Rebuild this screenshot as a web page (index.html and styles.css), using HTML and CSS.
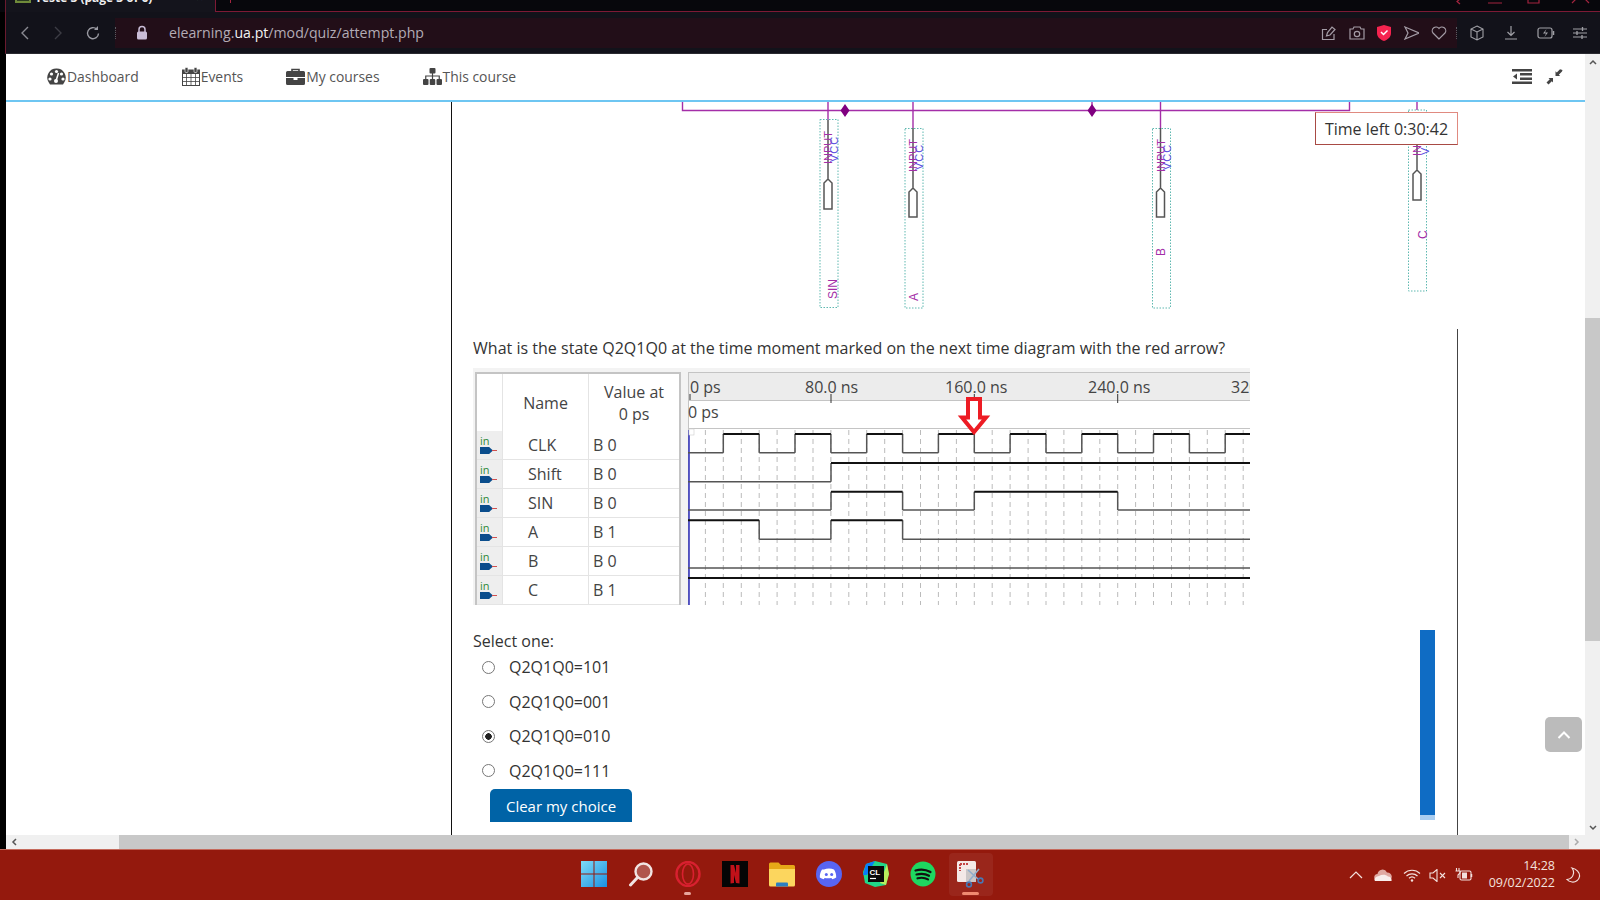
FILE: index.html
```html
<!DOCTYPE html>
<html lang="en">
<head>
<meta charset="utf-8" />
<title>Teste 3 (page 3 of 6)</title>
<link rel="stylesheet" href="styles.css">
</head>
<body>

<!-- browser chrome -->
<div class="tabstrip">
	<div class="tab">
		<span class="tab-fav"></span>
		<span class="tab-title">Teste 3 (page 3 of 6)</span>
		<span class="tab-close">×</span>
	</div>
	<div class="tab-rest">
		<span class="tab-plus"></span>
		<svg class="winctl" width="135" height="12" viewBox="0 0 135 12"><path d="M5-1 2 1.500 5 4M33 3h14M73 0v3h11V0M117 3l4-4M134 3l-4-4" fill="none" stroke="#a3243f" stroke-width="1.200"/></svg>
	</div>
</div>

<div class="addressbar">
	<div class="nav-btns">
		<svg width="12" height="16" viewBox="0 0 12 16"><path d="M9 2 3 8l6 6" fill="none" stroke="#8a8a92" stroke-width="1.400"/></svg>
		<svg width="12" height="16" viewBox="0 0 12 16"><path d="M3 2l6 6-6 6" fill="none" stroke="#3c3c44" stroke-width="1.400"/></svg>
		<svg width="16" height="16" viewBox="0 0 16 16"><path d="M13.500 8.500a5.500 5.500 0 1 1-1.800-4.400" fill="none" stroke="#9a9aa2" stroke-width="1.400"/><path d="M13 1v4H9z" fill="#9a9aa2"/></svg>
	</div>
	<div class="urlbox">
		<svg class="lock" width="12" height="15" viewBox="0 0 12 15"><path d="M3 7V4.500a3 3 0 0 1 6 0V7" fill="none" stroke="#c9bcd6" stroke-width="1.500"/><rect x="1" y="6.500" width="10" height="8" rx="1.500" fill="#c9bcd6"/></svg>
		<span class="url">elearning.<b>ua.pt</b>/mod/quiz/attempt.php</span>
		<div class="url-icons">
			<svg width="16" height="16" viewBox="0 0 16 16"><path d="M13 9v5.500H1.500v-10H6M5.500 11l1-3.500L11 2l3 2.500L9 10z" fill="none" stroke="#a49ca6" stroke-width="1.200"/></svg>
			<svg width="16" height="14" viewBox="0 0 16 14"><path d="M1 3h3l1-2h6l1 2h3v10H1z" fill="none" stroke="#a49ca6" stroke-width="1.200"/><circle cx="8" cy="8" r="2.700" fill="none" stroke="#a49ca6" stroke-width="1.200"/></svg>
			<svg width="14" height="16" viewBox="0 0 14 16"><path d="M7 0l7 2v6c0 4-3 6.500-7 8-4-1.500-7-4-7-8V2z" fill="#f5234f"/><path d="M4 7l2.500 2.500L10.500 5.500" fill="none" stroke="#fff" stroke-width="1.500"/></svg>
			<svg width="16" height="14" viewBox="0 0 16 14"><path d="M2 1l14 6-14 6 3-6z" fill="none" stroke="#a49ca6" stroke-width="1.200"/></svg>
			<svg width="16" height="14" viewBox="0 0 16 14"><path d="M8 13 2 7a3.700 3.700 0 0 1 6-4.500A3.700 3.700 0 0 1 14 7z" fill="none" stroke="#a49ca6" stroke-width="1.200"/></svg>
		</div>
	</div>
	<div class="tool-icons">
		<svg width="16" height="16" viewBox="0 0 16 16"><path d="M8 1l6 3v8l-6 3-6-3V4zM2 4l6 3 6-3M8 7v8" fill="none" stroke="#a0a0a6" stroke-width="1.100"/></svg>
		<svg width="16" height="16" viewBox="0 0 16 16"><path d="M8 1v9M4.500 7 8 10.500 11.500 7M2 14h12" fill="none" stroke="#a0a0a6" stroke-width="1.200"/></svg>
		<svg width="18" height="12" viewBox="0 0 18 12"><rect x="1" y="1" width="14" height="10" rx="2" fill="none" stroke="#a0a0a6" stroke-width="1.200"/><path d="M16.500 4v4" stroke="#a0a0a6" stroke-width="1.500"/><path d="M9.500 2 6 6.500h3L7.500 10 11 5.500H8z" fill="#a0a0a6"/></svg>
		<svg width="14" height="14" viewBox="0 0 14 14"><path d="M0 3h14M0 7h14M0 11h14" stroke="#a0a0a6"/><path d="M9.500 1v4M4 5v4M9 9v4" stroke="#a0a0a6" stroke-width="1.300"/></svg>
	</div>
</div>

<!-- the moodle page itself -->
<div class="viewport">
	<div class="page">
		<div class="topnav">
			<a class="topnav-item">
				<svg width="19" height="17" viewBox="0 0 19 17"><path d="M9.500 0.500a9 9 0 0 0-8 13.500l1.500 2.500h13l1.500-2.500a9 9 0 0 0-8-13.500z" fill="#444"/><circle cx="9.500" cy="3.500" r="1.600" fill="#fff"/><circle cx="4.500" cy="6" r="1.600" fill="#fff"/><circle cx="14.500" cy="6" r="1.600" fill="#fff"/><circle cx="3" cy="11" r="1.600" fill="#fff"/><circle cx="16" cy="11" r="1.600" fill="#fff"/><path d="M9 13 11.500 5" stroke="#fff" stroke-width="1.500"/><circle cx="9" cy="13" r="2" fill="#fff"/></svg>
				Dashboard
			</a>
			<a class="topnav-item">
				<svg width="18" height="19" viewBox="0 0 18 19"><rect x="0.500" y="3" width="17" height="15.500" fill="none" stroke="#444"/><path d="M0.500 3h17v4h-17z" fill="#444"/><path d="M0 10.500h18M0 14.500h18M4.500 7v11M9 7v11M13.500 7v11" stroke="#444" stroke-width="0.800"/><rect x="3" y="0.500" width="3" height="5" rx="1" fill="#444" stroke="#fff" stroke-width="0.600"/><rect x="12" y="0.500" width="3" height="5" rx="1" fill="#444" stroke="#fff" stroke-width="0.600"/></svg>
				Events
			</a>
			<a class="topnav-item">
				<svg width="19" height="17" viewBox="0 0 19 17"><path d="M6 3V1.500h7V3" fill="none" stroke="#444" stroke-width="1.600"/><path d="M1.500 3h16A1.500 1.500 0 0 1 19 4.500V9H0V4.500A1.500 1.500 0 0 1 1.500 3zM0 10h7.500v2h4v-2H19v5.500a1.500 1.500 0 0 1-1.500 1.500h-16A1.500 1.500 0 0 1 0 15.500z" fill="#444"/></svg>
				My courses
			</a>
			<a class="topnav-item">
				<svg width="19" height="17" viewBox="0 0 19 17"><rect x="6.500" y="0" width="6" height="5.500" rx="1" fill="#444"/><rect x="0" y="11" width="5.500" height="6" rx="1" fill="#444"/><rect x="6.750" y="11" width="5.500" height="6" rx="1" fill="#444"/><rect x="13.500" y="11" width="5.500" height="6" rx="1" fill="#444"/><path d="M9.500 5v6M2.750 11V8h13.500v3" fill="none" stroke="#444" stroke-width="1.200"/></svg>
				This course
			</a>
			<div class="topnav-right">
				<svg width="20" height="15" viewBox="0 0 20 15"><path d="M0 0h20v2.500H0zM8 4h12v2.500H8zM8 8.500h12V11H8zM0 12.500h20V15H0z" fill="#444"/><path d="M5 4.500v6L1 7.500z" fill="#444"/></svg>
				<svg width="17" height="16" viewBox="0 0 17 16"><path d="M16.500 1 14 .2 10.800 3.500 9.500 2.300V7h4.700l-1.400-1.300L16 2.500zM0.500 13.500l2 2 3.300-3.300L7 13.500V9H2.500l1.300 1.300z" fill="#444"/></svg>
			</div>
		</div>

		<div class="content">
			<div class="columns">
				<div class="region-left"></div>
				<div class="region-main">
					<svg class="schematic" width="1006" height="227" viewBox="452 102 1006 227">
						<g fill="none" stroke="#a42ea8" stroke-width="1.400">
							<path d="M682.500 102v8.500h667V102"/>
							<path d="M828 102v18M913 102v26M1160.500 102v26M1417 102v8M1092 102v8"/>
						</g>
						<path d="M845 104l4.500 6.500-4.500 6.500-4.500-6.500zM1092 104l4.500 6.500-4.500 6.500-4.500-6.500z" fill="#800080"/>

						<g fill="none" stroke="#5eb8b0" stroke-dasharray="1.500 1.500">
							<rect x="820" y="119.500" width="18" height="188"/>
							<rect x="905" y="128.500" width="18" height="179.500"/>
							<rect x="1152.500" y="128.500" width="18" height="179.500"/>
							<rect x="1408.500" y="110" width="18" height="181"/>
						</g>

						<g fill="none" stroke="#555" stroke-width="1.500">
							<path d="M828 120v59M824 209v-26l4-4 4 4v26z" fill="#fff"/>
							<path d="M913 128v60M909 217v-25l4-4 4 4v25z" fill="#fff"/>
							<path d="M1160.500 128v60M1156.500 217v-25l4-4 4 4v25z" fill="#fff"/>
							<path d="M1417 145v25M1413 200v-26l4-4 4 4v26z" fill="#fff"/>
						</g>

						<g class="pin-input">
							<text transform="translate(832 164) rotate(-90)">INPUT</text>
							<text transform="translate(917 172) rotate(-90)">INPUT</text>
							<text transform="translate(1164.500 172) rotate(-90)">INPUT</text>
							<text transform="translate(1421 156) rotate(-90)">IN</text>
						</g>
						<g class="pin-vcc">
							<text transform="translate(838 162) rotate(-90)">VCC</text>
							<text transform="translate(923 170) rotate(-90)">VCC</text>
							<text transform="translate(1170.500 170) rotate(-90)">VCC</text>
							<text transform="translate(1429 155) rotate(-90)">V</text>
						</g>
						<g class="pin-name">
							<text transform="translate(837 299) rotate(-90)">SIN</text>
							<text transform="translate(918 301) rotate(-90)">A</text>
							<text transform="translate(1165 256) rotate(-90)">B</text>
							<text transform="translate(1427 239) rotate(-90)">C</text>
						</g>
					</svg>

					<div class="question">
						<p class="question-text">What is the state Q2Q1Q0 at the time moment marked on the next time diagram with the red arrow?</p>

						<div class="wave-shot">
							<table class="signals">
								<tr class="signals-head">
									<th class="col-icon"></th>
									<th class="col-name">Name</th>
									<th class="col-value">Value at<br>0 ps</th>
								</tr>
								<tr><td class="col-icon"><span class="in-icon">in</span></td><td class="col-name">CLK</td><td>B 0</td></tr>
								<tr><td class="col-icon"><span class="in-icon">in</span></td><td class="col-name">Shift</td><td>B 0</td></tr>
								<tr><td class="col-icon"><span class="in-icon">in</span></td><td class="col-name">SIN</td><td>B 0</td></tr>
								<tr><td class="col-icon"><span class="in-icon">in</span></td><td class="col-name">A</td><td>B 1</td></tr>
								<tr><td class="col-icon"><span class="in-icon">in</span></td><td class="col-name">B</td><td>B 0</td></tr>
								<tr><td class="col-icon"><span class="in-icon">in</span></td><td class="col-name">C</td><td>B 1</td></tr>
								<tr class="signals-cut"><td class="col-icon"></td><td class="col-name"></td><td></td></tr>
							</table>
							<svg class="wave-plot" width="562" height="233" viewBox="688 372 562 233">
								<rect x="688" y="372" width="562" height="29" fill="#ececec"/>
								<path d="M688 372.500h562M688 400.500h562M688 428.500h562" stroke="#c4c4c4"/>
								<path d="M688.500 372v233" stroke="#c4c4c4"/>
								<path d="M690 394v6M831 394v9M974.300 394v9M1117.700 394v9" stroke="#333"/>
								<path id="grid" stroke="#bbb" stroke-dasharray="5 4" d="M705.400 430v175M723.300 430v175M741.300 430v175M759.200 430v175M777.100 430v175M795 430v175M813 430v175M830.900 430v175M848.800 430v175M866.700 430v175M884.700 430v175M902.600 430v175M920.500 430v175M938.400 430v175M956.400 430v175M974.300 430v175M992.200 430v175M1010.100 430v175M1028.100 430v175M1046 430v175M1063.900 430v175M1081.800 430v175M1099.800 430v175M1117.700 430v175M1135.600 430v175M1153.500 430v175M1171.500 430v175M1189.400 430v175M1207.300 430v175M1225.200 430v175M1243.200 430v175"/>
								<path d="M689 430v175" stroke="#2a2ab8" stroke-width="1.500"/>
								<rect x="689" y="429" width="5" height="6" fill="#fff" stroke="#ccc" stroke-width="0.600"/>

								<g class="wave-ruler">
									<text x="690" y="393">0 ps</text>
									<text x="805" y="393">80.0 ns</text>
									<text x="945" y="393">160.0 ns</text>
									<text x="1088" y="393">240.0 ns</text>
									<text x="1231" y="393">320.0 ns</text>
									<text x="688" y="418">0 ps</text>
								</g>

								<g class="wave-low">
									<path d="M688 452.700h35.300M759.200 452.700H795M830.900 452.700h35.800M902.600 452.700h35.800M974.300 452.700h35.800M1046 452.700h35.800M1117.700 452.700h35.800M1189.400 452.700h35.800"/>
									<path d="M688 481.700h143M688 510h143M902.600 510h71.700M1117.700 510H1250M759.200 539.300h71.700M902.600 539.300H1250M688 568h562"/>
									<path d="M723.300 452.700V434M759.200 434v18.700M795 452.700V434M830.900 434v18.700M866.700 452.700V434M902.600 434v18.700M938.400 452.700V434M974.300 434v18.700M1010.100 452.700V434M1046 434v18.700M1081.800 452.700V434M1117.700 434v18.700M1153.500 452.700V434M1189.400 434v18.700M1225.200 452.700V434"/>
									<path d="M831 481.700V463M831 510v-18.300M902.600 491.700V510M974.300 510v-18.300M1117.700 491.700V510M759.200 520.300v19M830.900 539.300v-19M902.600 520.300v19"/>
								</g>
								<g class="wave-high">
									<path d="M723.300 434h35.900M795 434h35.900M866.700 434h35.900M938.400 434h35.900M1010.100 434h35.900M1081.800 434h35.900M1153.500 434h35.900M1225.200 434H1250"/>
									<path d="M831 463h419M831 491.700h71.600M974.300 491.700h143.400M688 520.300h71.200M830.900 520.300h71.700M688 578h562"/>
								</g>
								<path d="M968 399h12v18.500h6L974 432l-12-14.500h6z" fill="#fff" stroke="#ed1c24" stroke-width="4"/>
							</svg>
						</div>

						<div class="answer-row">
							<div class="answer">
								<div class="prompt">Select one:</div>
								<label class="option"><input type="radio" name="q3" />Q2Q1Q0=101</label>
								<label class="option"><input type="radio" name="q3" />Q2Q1Q0=001</label>
								<label class="option"><input type="radio" name="q3" checked />Q2Q1Q0=010</label>
								<label class="option"><input type="radio" name="q3" />Q2Q1Q0=111</label>
								<button class="clear-btn">Clear my choice</button>
							</div>
							<div class="blue-bar"></div>
						</div>
					</div>
				</div>
			</div>
			<div class="timer">Time left 0:30:42</div>
			<div class="back-top"><svg width="14" height="8" viewBox="0 0 14 8"><path d="M1.500 7 7 1.500 12.500 7" fill="none" stroke="#fff" stroke-width="2"/></svg></div>
		</div>

		<div class="hscroll">
			<div class="hscroll-arrow"><svg width="6" height="8" viewBox="0 0 6 8"><path d="M5 1 2 4l3 3" fill="none" stroke="#555" stroke-width="1.500"/></svg></div>
			<div class="hscroll-thumb"></div>
			<div class="hscroll-arrow hscroll-arrow-r"><svg width="6" height="8" viewBox="0 0 6 8"><path d="M1 1l3 3-3 3" fill="none" stroke="#aaa" stroke-width="1.500"/></svg></div>
		</div>
	</div>

	<div class="vscroll">
		<div class="vscroll-btn"><svg width="8" height="6" viewBox="0 0 8 6"><path d="M1 5l3-3 3 3" fill="none" stroke="#555" stroke-width="1.500"/></svg></div>
		<div class="vscroll-track"><div class="vscroll-thumb"></div></div>
		<div class="vscroll-btn"><svg width="8" height="6" viewBox="0 0 8 6"><path d="M1 1l3 3 3-3" fill="none" stroke="#555" stroke-width="1.500"/></svg></div>
		<div class="vscroll-corner"></div>
	</div>
</div>

<!-- windows taskbar -->
<div class="taskbar">
	<div class="task-apps">
		<span class="app"><svg width="26" height="26" viewBox="0 0 26 26"><defs><linearGradient id="win" x1="0" y1="0" x2="1" y2="1"><stop offset="0" stop-color="#7fdcf8"/><stop offset="1" stop-color="#1a8fe0"/></linearGradient></defs><path d="M0 0h12.500v12.500H0zM13.500 0H26v12.500H13.500zM0 13.500h12.500V26H0zM13.500 13.500H26V26H13.500z" fill="url(#win)"/></svg></span>
		<span class="app"><svg width="26" height="26" viewBox="0 0 26 26"><circle cx="15.500" cy="10.500" r="8" fill="#b0554c" stroke="#f1e4e2" stroke-width="2.400"/><path d="M9.500 16.500 2.500 24" stroke="#f1e4e2" stroke-width="3" stroke-linecap="round"/></svg></span>
		<span class="app app-running"><svg width="26" height="26" viewBox="0 0 26 26"><ellipse cx="13" cy="13" rx="11.500" ry="12" fill="none" stroke="#d8202f" stroke-width="2.400"/><ellipse cx="13" cy="13" rx="5.500" ry="10" fill="none" stroke="#d8202f" stroke-width="1.600"/></svg></span>
		<span class="app"><svg width="26" height="26" viewBox="0 0 26 26"><rect width="26" height="26" fill="#050505"/><path d="M8.500 4H12l2 8V4h3.500v18.500l-3.500-.5-2-8v8l-3.500.5z" fill="#c11119"/></svg></span>
		<span class="app"><svg width="26" height="26" viewBox="0 0 26 26"><path d="M0 3a1.500 1.500 0 0 1 1.500-1.500h8L12 4h12.500A1.500 1.500 0 0 1 26 5.500V10H0z" fill="#e6a817"/><path d="M0 8h26v16a1.500 1.500 0 0 1-1.500 1.500h-23A1.500 1.500 0 0 1 0 24z" fill="#fcd65e"/><path d="M7 22.500a1 1 0 0 1 1-1h10a1 1 0 0 1 1 1v3H7z" fill="#2b7fc2"/></svg></span>
		<span class="app"><svg width="26" height="26" viewBox="0 0 26 26"><circle cx="13" cy="13" r="13" fill="#5865f2"/><path d="M8 8.500c3-1.300 7-1.300 10 0 1.500 2.300 2.300 5 2.200 8-1.200.9-2.500 1.500-3.900 1.800l-.9-1.400c-2.200.6-4.600.6-6.800 0l-.9 1.400c-1.400-.3-2.700-.9-3.900-1.800-.1-3 .7-5.700 2.200-8z" fill="#fff"/><circle cx="10.300" cy="13.500" r="1.500" fill="#5865f2"/><circle cx="15.700" cy="13.500" r="1.500" fill="#5865f2"/></svg></span>
		<span class="app"><svg width="26" height="26" viewBox="0 0 26 26"><path d="M3 3l9-3 12 3 2 10-3 11-11 2-10-4-2-11z" fill="#21d789"/><path d="M3 3l9-3-8 14-4 0z" fill="#087cfa"/><path d="M24 3l2 10-3 11-6-2z" fill="#fcf84a" opacity="0.700"/><rect x="5" y="5" width="16" height="16" fill="#0a0a0a"/><text class="app-clion" x="6.500" y="13.500">CL</text><path d="M7 17.500h6" stroke="#fff" stroke-width="1.200"/></svg></span>
		<span class="app"><svg width="26" height="26" viewBox="0 0 26 26"><circle cx="13" cy="13" r="12.500" fill="#1ed760"/><path d="M5.500 9.500c5-1.500 10.500-1 15 1.500M6.500 13.500c4.500-1.200 9-.8 12.500 1.300M7.500 17.300c3.800-1 7.500-.6 10.500 1.100" fill="none" stroke="#111" stroke-width="2.200" stroke-linecap="round"/></svg></span>
		<span class="app app-active"><svg width="27" height="27" viewBox="0 0 27 27"><rect x="0" y="0" width="19" height="21" rx="1.500" fill="#f4e8e6"/><rect x="9" y="8" width="10" height="13" fill="#c9c4c4"/><path d="M3 3v7M3 3h8" stroke="#c23a3a" stroke-width="2" stroke-dasharray="2 1"/><path d="M11 9l10 9M22 8 12 20" stroke="#8ba8c8" stroke-width="1.600"/><circle cx="12" cy="23.500" r="2.400" fill="none" stroke="#3d6fb0" stroke-width="1.600"/><circle cx="23.500" cy="19.500" r="2.400" fill="none" stroke="#3d6fb0" stroke-width="1.600"/></svg></span>
	</div>
	<div class="tray">
		<svg width="14" height="8" viewBox="0 0 14 8"><path d="M1 7l6-6 6 6" fill="none" stroke="#f3e1de" stroke-width="1.200"/></svg>
		<svg class="tray-wide" width="18" height="12" viewBox="0 0 18 12"><path d="M4 12a3.500 3.500 0 0 1-.5-7A5 5 0 0 1 13 3.500 4.200 4.200 0 0 1 14 12z" fill="#e0a9a2"/><path d="M1 12c-1.500-2 .5-4.500 4-5 3-2 7-1.500 9 .5 2.500 0 4 2 3.500 4.500z" fill="#f8eeec"/></svg>
		<svg class="tray-wide" width="18" height="13" viewBox="0 0 18 13"><path d="M1 4.500a11.500 11.500 0 0 1 16 0M3.500 7a8 8 0 0 1 11 0M6 9.300a4.500 4.500 0 0 1 6 0" fill="none" stroke="#f3e1de" stroke-width="1.200"/><circle cx="9" cy="11.500" r="1.200" fill="#f3e1de"/></svg>
		<svg width="18" height="13" viewBox="0 0 18 13"><path d="M1 4h3l4-3.500v12L4 9H1z" fill="none" stroke="#f3e1de" stroke-width="1.100"/><path d="M11 4l5 5M16 4l-5 5" stroke="#f3e1de" stroke-width="1.100"/></svg>
		<svg width="18" height="14" viewBox="0 0 18 14"><rect x="5" y="3" width="11" height="9" rx="1.500" fill="none" stroke="#f3e1de" stroke-width="1.100"/><path d="M16.500 6v3" stroke="#f3e1de" stroke-width="1.500"/><rect x="7" y="4.500" width="5" height="6" fill="#f3e1de"/><path d="M1.500 0v3M4 0v3M.5 3h4.500v2L3 7v3" fill="none" stroke="#f3e1de" stroke-width="1.100"/></svg>
		<div class="clock">14:28<br>09/02/2022</div>
		<svg class="tray-wide" width="15" height="16" viewBox="0 0 15 16"><path d="M6 1c4.500 1 8 4.500 7.500 8.500-.5 3.500-4 6-7.500 5.500-2-.3-4-1.200-5-2.500 3.500-.5 6-3 6.500-6 .3-2-.3-4-1.500-5.500z" fill="none" stroke="#f3e1de" stroke-width="1.200"/></svg>
	</div>
</div>

</body>
</html>
```

FILE: styles.css
```css
html, body { height: 100%; }

body {
	margin: 0;
	padding: 0;
	overflow: hidden;
	display: flex;
	flex-direction: column;
	background: #000;
	color: #333;
	font-family: "Open Sans", "Liberation Sans", sans-serif;
}

/* browser chrome */
.tabstrip {
	height: 12px;
	display: flex;
	background: #07070c;
	overflow: hidden;
	flex: none;
}

.tab {
	width: 210px;
	margin-left: 5px;
	padding-left: 9px;
	display: flex;
	gap: 4px;
	align-items: flex-end;
	background: #14141c;
	border-left: 1px solid #6a1a2e;
	box-sizing: border-box;
	color: #f0f0f0;
	font-size: 12px;
	font-weight: 700;
}

.tab-fav {
	width: 12px;
	height: 10px;
	margin-bottom: 9px;
	border: 2px solid #6f8a3a;
	background: #2a3a20;
	flex: none;
}

.tab-title {
	line-height: 13px;
	margin-bottom: 8px;
	white-space: nowrap;
	color: #eee;
}

.tab-close {
	margin-left: auto;
	margin-right: 12px;
	font-weight: 400;
	line-height: 12px;
	margin-bottom: 8px;
	color: #aaa;
}

.tab-rest {
	flex: 1;
	display: flex;
	border-bottom: 1px solid #7d1a35;
	border-left: 1px solid #7d1a35;
}

.tab-plus {
	width: 1px;
	height: 3px;
	margin-left: 14px;
	background: #a3243f;
}

.winctl {
	margin-left: auto;
	margin-right: 10px;
}

.addressbar {
	height: 42px;
	display: flex;
	align-items: center;
	background: #12121a;
	margin-left: 5px;
	flex: none;
	border-left: 1px solid #6a1a2e;
	border-bottom: 1px solid #2a2a30;
	box-sizing: border-box;
}

.nav-btns {
	width: 109px;
	padding-left: 13px;
	display: flex;
	gap: 21px;
	align-items: center;
	box-sizing: border-box;
	flex: none;
}

.urlbox {
	width: 1342px;
	height: 30px;
	display: flex;
	align-items: center;
	background: #220e18;
	padding-left: 21px;
	box-sizing: border-box;
	flex: none;
	position: relative;
}

.urlbox::before, .urlbox::after {
	content: "";
	position: absolute;
	top: 9px;
	height: 12px;
	border-left: 1px dotted #5a5a60;
}

.urlbox::before { left: 0; }
.urlbox::after { right: 0; }

.lock { margin-right: 21px; }

.url {
	font-size: 14.150px;
	color: #b3abb5;
	white-space: nowrap;
}

.url b {
	font-weight: 400;
	color: #f2f2f2;
}

.url-icons {
	margin-left: auto;
	margin-right: 10px;
	display: flex;
	gap: 12px;
	align-items: center;
}

.tool-icons {
	margin-left: 12px;
	display: flex;
	gap: 18px;
	align-items: center;
}

/* page */
.viewport {
	flex: 1;
	display: flex;
	margin-left: 6px;
	min-height: 0;
	background: #fff;
}

.page {
	flex: 1;
	min-width: 0;
	display: flex;
	flex-direction: column;
}

.topnav {
	height: 45px;
	padding-bottom: 1px;
	flex: none;
	display: flex;
	align-items: center;
	gap: 43px;
	padding-left: 41px;
	padding-right: 22px;
	border-bottom: 2px solid #6ec6f2;
	background: #fff;
	position: relative;
	z-index: 2;
}

.topnav-item {
	display: flex;
	align-items: center;
	gap: 1px;
	font-size: 13.900px;
	color: #555;
}

.topnav-right {
	margin-left: auto;
	display: flex;
	gap: 14px;
	align-items: center;
}

.content {
	flex: 1;
	min-height: 0;
	position: relative;
	overflow: hidden;
}

.columns {
	display: flex;
	height: 100%;
}

.region-left {
	width: 445px;
	flex: none;
}

.region-main {
	width: 1005px;
	flex: none;
	border-left: 1px solid #111;
	border-right: 1px solid #444;
}

.schematic {
	display: block;
	background: #fff;
	position: relative;
}

.pin-input text, .pin-vcc text, .pin-name text {
	font-family: "Liberation Sans", sans-serif;
	font-size: 11px;
}

.pin-input text { fill: #a42ea8; }
.pin-vcc text { fill: #5a50e0; letter-spacing: 1px; }
.pin-name text { fill: #a42ea8; font-size: 12px; }

.question {
	padding-left: 21px;
}

.question-text {
	margin: 8px 0 0 0;
	font-size: 16px;
	line-height: 22px;
	letter-spacing: .02px;
	color: #333;
}

/* time diagram */
.wave-shot {
	margin-top: 9px;
	width: 777px;
	height: 237px;
	padding-top: 4px;
	display: flex;
	background: #f3f3f3;
	box-sizing: border-box;
	overflow: hidden;
}

.signals {
	margin-left: 2px;
	width: 206px;
	height: 233px;
	border-collapse: collapse;
	table-layout: fixed;
	background: #fff;
	border: 2px solid #c4c4c4;
	border-bottom: 0;
	flex: none;
	font-size: 16px;
	color: #444;
	align-self: flex-start;
}

.signals th {
	height: 57px;
	padding: 0;
	font-weight: 400;
	line-height: 22px;
	border-right: 1px solid #e4e4e4;
}

.signals td {
	height: 28px;
	padding: 0 0 0 4px;
	border: 1px solid #e4e4e4;
	border-left: 0;
	border-top: 0;
}

.col-icon { width: 25px; }
.signals td.col-icon { background: #eee; padding: 0; }
.col-name { width: 85px; }
.signals td.col-name { padding-left: 25px; }
.signals .signals-cut td { height: 3px; }

.in-icon {
	display: block;
	position: relative;
	width: 18px;
	height: 18px;
	margin-left: 3px;
	font-size: 11px;
	line-height: 9px;
	color: #2f8a3a;
}

.in-icon::before {
	content: "";
	position: absolute;
	left: 0;
	bottom: 0;
	width: 13px;
	height: 7px;
	background: #0a4d8c;
	clip-path: polygon(0 0, 70% 0, 100% 50%, 70% 100%, 0 100%);
}

.in-icon::after {
	content: "";
	position: absolute;
	left: 12px;
	bottom: 3px;
	width: 5px;
	height: 1px;
	background: #d05050;
}

.wave-plot {
	display: block;
	margin-left: 7px;
	background: #fff;
	flex: none;
}

.wave-ruler text {
	font-size: 16px;
	fill: #444;
}

.wave-low path {
	fill: none;
	stroke: #555;
	stroke-width: 1.500;
}

.wave-high path {
	fill: none;
	stroke: #111;
	stroke-width: 2;
}

/* answer block */
.answer-row {
	display: flex;
}

.answer {
	flex: 1;
	padding-top: 25px;
}

.prompt {
	font-size: 16px;
	line-height: 22px;
	margin-bottom: -2px;
}

.option {
	display: flex;
	align-items: center;
	height: 34.500px;
	padding-left: 9px;
	font-size: 16px;
	color: #333;
}

.option input {
	appearance: none;
	width: 13px;
	height: 13px;
	margin: 0 14px 0 0;
	border: 1px solid #777;
	border-radius: 50%;
	background: #fff;
}

.option input:checked {
	background: radial-gradient(circle, #222 0 3px, #fff 3.500px);
}

.clear-btn {
	display: block;
	margin: 1px 0 0 17px;
	width: 142px;
	height: 33px;
	padding: 0;
	border: 0;
	border-radius: 5px 5px 0 0;
	background: #0063a6;
	color: #fff;
	font-family: inherit;
	font-size: 15px;
}

.blue-bar {
	width: 15px;
	height: 190px;
	margin: 25px 22px 0 0;
	background: linear-gradient(#0f6cc4 0 185px, #a9cdf0 185px);
}

/* overlays */
.timer {
	position: absolute;
	left: 1309px;
	top: 10px;
	width: 143px;
	height: 33px;
	box-sizing: border-box;
	border: 1px solid;
	border-color: #e08a80 #e08a80 #a84a44 #a84a44;
	background: #fff;
	font-size: 16px;
	line-height: 32px;
	text-align: center;
	color: #333;
}

.back-top {
	position: absolute;
	right: 3px;
	top: 615px;
	width: 37px;
	height: 35px;
	border-radius: 5px;
	background: #bbb;
	display: flex;
	align-items: center;
	justify-content: center;
}

/* scrollbars */
.hscroll {
	height: 14px;
	flex: none;
	display: flex;
	background: #f0f0f0;
}

.hscroll-arrow {
	width: 16px;
	display: flex;
	align-items: center;
	justify-content: center;
	flex: none;
}

.hscroll-thumb {
	margin-left: 97px;
	width: 1450px;
	background: #c8c8c8;
}

.vscroll {
	width: 15px;
	flex: none;
	display: flex;
	flex-direction: column;
	background: #f0f0f0;
}

.vscroll-btn {
	height: 15px;
	display: flex;
	align-items: center;
	justify-content: center;
	flex: none;
}

.vscroll-track {
	flex: 1;
	padding-top: 249px;
}

.vscroll-thumb {
	height: 323px;
	background: #c8c8c8;
}

.vscroll-corner {
	height: 14px;
	flex: none;
}

/* taskbar */
.taskbar {
	height: 51px;
	flex: none;
	position: relative;
	display: flex;
	justify-content: center;
	background: #94190d;
	border-top: 1px solid #c56a5c;
	box-sizing: border-box;
}

.task-apps {
	display: flex;
	align-items: center;
	gap: 20px;
	margin-left: -36px;
	padding-bottom: 2px;
}

.app {
	width: 27px;
	height: 27px;
	display: flex;
	align-items: center;
	justify-content: center;
	position: relative;
}

.app-running::after {
	content: "";
	position: absolute;
	left: 9px;
	bottom: -7px;
	width: 7px;
	height: 3px;
	border-radius: 2px;
	background: #e8a59c;
}

.app-active::before {
	content: "";
	position: absolute;
	left: -8px;
	top: -8px;
	width: 44px;
	height: 43px;
	border-radius: 4px;
	background: rgba(255, 255, 255, .06);
}

.app-active::after {
	content: "";
	position: absolute;
	left: 5px;
	bottom: -7px;
	width: 17px;
	height: 3px;
	border-radius: 2px;
	background: #f08a70;
}

.app-clion {
	font-family: "Liberation Sans", sans-serif;
	font-size: 8px;
	font-weight: 700;
	fill: #fff;
}

.tray {
	position: absolute;
	right: 19px;
	top: 0;
	bottom: 0;
	display: flex;
	align-items: center;
	gap: 8px;
}

.tray-wide { margin-left: 3px; }

.clock {
	margin-left: 8px;
	font-size: 12.500px;
	line-height: 17px;
	padding-bottom: 2px;
	text-align: right;
	color: #f3e1de;
}
```
